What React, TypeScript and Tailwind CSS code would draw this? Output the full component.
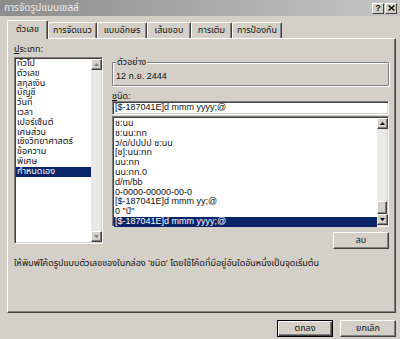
import React from "react";

const categories = [
  "ทั่วไป",
  "ตัวเลข",
  "สกุลเงิน",
  "บัญชี",
  "วันที่",
  "เวลา",
  "เปอร์เซ็นต์",
  "เศษส่วน",
  "เชิงวิทยาศาสตร์",
  "ข้อความ",
  "พิเศษ",
  "กำหนดเอง",
];

const formats = [
  "ช:นน",
  "ช:นน:ทท",
  "ว/ด/ปปปป ช:นน",
  "[ช]:นน:ทท",
  "นน:ทท",
  "นน:ทท.0",
  "d/m/bb",
  "0-0000-00000-00-0",
  "[$-187041E]d mmm yy;@",
  '0 "ปี"',
  "[$-187041E]d mmm yyyy;@",
];

const tabs = [
  { label: "ตัวเลข", w: "w-[41px]" },
  { label: "การจัดแนว", w: "w-[49px]" },
  { label: "แบบอักษร", w: "w-[50px]" },
  { label: "เส้นขอบ", w: "w-[44px]" },
  { label: "การเติม", w: "w-[41px]" },
  { label: "การป้องกัน", w: "w-[50px]" },
];

function Arrow({ up, disabled }: { up?: boolean; disabled?: boolean }) {
  return (
    <div className="flex h-[11px] w-[11px] items-center justify-center border border-t-white border-l-white border-b-[#404040] border-r-[#404040] bg-[#d4d0c8] shadow-[inset_-1px_-1px_0_#808080]">
      <svg width="5" height="3" viewBox="0 0 5 3">
        <polygon
          points={up ? "2.5,0 5,3 0,3" : "0,0 5,0 2.5,3"}
          fill={disabled ? "#808080" : "#000"}
        />
      </svg>
    </div>
  );
}

function Btn({ children, def }: { children: React.ReactNode; def?: boolean }) {
  return (
    <div
      className={`flex h-[17px] w-[56px] items-center justify-center bg-[#d4d0c8] ${
        def
          ? "border border-black shadow-[inset_1px_1px_0_white,inset_-1px_-1px_0_#404040,inset_-2px_-2px_0_#808080]"
          : "border border-t-white border-l-white border-b-[#404040] border-r-[#404040] shadow-[inset_-1px_-1px_0_#808080]"
      }`}
    >
      {children}
    </div>
  );
}

export default function App() {
  return (
    <div className="relative flex h-[339px] w-[400px] flex-col overflow-hidden bg-[#d4d0c8] font-['Liberation_Sans','Noto_Sans_Thai','DejaVu_Sans',sans-serif] text-[9px] text-[#111]">
      {/* title bar */}
      <div className="flex h-[16px] items-center justify-between bg-gradient-to-r from-[#8c8c8c] to-[#c6c6c6] pl-[4px] pr-[3px]">
        <span className="text-[10px] leading-none text-[#ececec]">
          การจัดรูปแบบเซลล์
        </span>
        <div className="flex gap-[1px]">
          <div className="flex h-[11px] w-[12px] items-center justify-center border border-t-white border-l-white border-b-[#404040] border-r-[#404040] bg-[#d4d0c8] text-[9px] font-bold leading-none">
            ?
          </div>
          <div className="flex h-[11px] w-[12px] items-center justify-center border border-t-white border-l-white border-b-[#404040] border-r-[#404040] bg-[#d4d0c8]">
            <svg width="7" height="6" viewBox="0 0 7 6">
              <path d="M0.5 0.5 L6.5 5.5 M6.5 0.5 L0.5 5.5" stroke="#000" strokeWidth="1.3" />
            </svg>
          </div>
        </div>
      </div>

      {/* tabs */}
      <div className="mt-[4px] flex h-[18px] items-end pl-[7px]">
        {tabs.map((t, i) =>
          i === 0 ? (
            <div
              key={t.label}
              className={`relative z-10 -mb-[1px] flex h-[19px] ${t.w} items-center justify-center rounded-t-[2px] border-l border-t border-white border-r border-r-[#404040] bg-[#d4d0c8] pb-[1px] shadow-[inset_-1px_0_0_#808080]`}
            >
              {t.label}
            </div>
          ) : (
            <div
              key={t.label}
              className={`flex h-[16px] ${t.w} items-center justify-center rounded-t-[2px] border-l border-t border-white border-r border-r-[#404040] shadow-[inset_-1px_0_0_#808080]`}
            >
              {t.label}
            </div>
          )
        )}
      </div>

      {/* panel */}
      <div className="ml-[7px] flex h-[275px] w-[389px] flex-col border border-t-white border-l-white border-b-[#404040] border-r-[#404040] px-[6px] pt-[5px] shadow-[inset_-1px_-1px_0_#808080]">
        <div className="flex">
          {/* left column */}
          <div className="flex w-[89px] flex-col">
            <div className="h-[10px] leading-[10px]">
              <span className="underline">ป</span>ระเภท:
            </div>
            <div className="mt-[3px] flex h-[187px] border border-t-[#808080] border-l-[#808080] border-b-white border-r-white bg-white shadow-[inset_1px_1px_0_#404040,inset_-1px_-1px_0_#d4d0c8]">
              <div className="flex flex-1 flex-col pl-[1px] pt-[1px]">
                {categories.map((c, i) => (
                  <div
                    key={c}
                    className={`h-[9.8px] pl-[1px] leading-[9.8px] ${
                      i === categories.length - 1 ? "bg-[#0a246a] text-white" : ""
                    }`}
                  >
                    {c}
                  </div>
                ))}
              </div>
              <div className="flex w-[11px] flex-col pb-[1px] pr-[1px] pt-[1px]">
                <Arrow up disabled />
                <div className="flex-1 bg-[#ebe9e5]" />
                <Arrow disabled />
              </div>
            </div>
          </div>

          {/* right column */}
          <div className="ml-[9px] flex w-[277px] flex-col pt-[18px]">
            <div className="relative h-[24px] rounded-[1px] border border-[#808080] shadow-[inset_1px_1px_0_white,1px_1px_0_white]">
              <span className="absolute -top-[6px] left-[3px] bg-[#d4d0c8] px-[1px] leading-[10px]">
                ตัวอย่าง
              </span>
              <div className="pl-[3px] pt-[8px] leading-[10px]">12 ก.ย. 2444</div>
            </div>

            <div className="mt-[5px] h-[10px] leading-[10px]">
              <span className="underline">ช</span>นิด:
            </div>
            <div className="flex h-[14px] items-center border border-t-[#808080] border-l-[#808080] border-b-white border-r-white bg-white pl-[2px] shadow-[inset_1px_1px_0_#404040,inset_-1px_-1px_0_#d4d0c8]">
              [$-187041E]d mmm yyyy;@
            </div>
            <div className="mt-[1px] flex h-[111px] border border-t-[#808080] border-l-[#808080] border-b-white border-r-white bg-white shadow-[inset_1px_1px_0_#404040,inset_-1px_-1px_0_#d4d0c8]">
              <div className="flex flex-1 flex-col pl-[1px] pt-[2px]">
                {formats.map((f, i) => (
                  <div
                    key={f}
                    className={`h-[9.8px] whitespace-pre pl-[1px] leading-[9.8px] ${
                      i === formats.length - 1 ? "bg-[#0a246a] text-white" : ""
                    }`}
                  >
                    {f}
                  </div>
                ))}
              </div>
              <div className="flex w-[11px] flex-col pb-[1px] pr-[1px] pt-[1px]">
                <Arrow up />
                <div className="flex-1 bg-[#ebe9e5]" />
                <div className="h-[13px] border border-t-white border-l-white border-b-[#404040] border-r-[#404040] bg-[#d4d0c8] shadow-[inset_-1px_-1px_0_#808080]" />
                <Arrow />
              </div>
            </div>
            <div className="mt-[5px] flex justify-end">
              <Btn>ลบ</Btn>
            </div>
          </div>
        </div>

        <div className="mt-[9px] leading-[10px]">
          ให้พิมพ์โค้ดรูปแบบตัวเลขของในกล่อง 'ชนิด' โดยใช้โค้ดที่มีอยู่อันใดอันหนึ่งเป็นจุดเริ่มต้น
        </div>
      </div>

      {/* bottom buttons */}
      <div className="mt-[7px] flex justify-end gap-[7px] pr-[4px]">
        <Btn def>ตกลง</Btn>
        <Btn>ยกเลิก</Btn>
      </div>
    </div>
  );
}
